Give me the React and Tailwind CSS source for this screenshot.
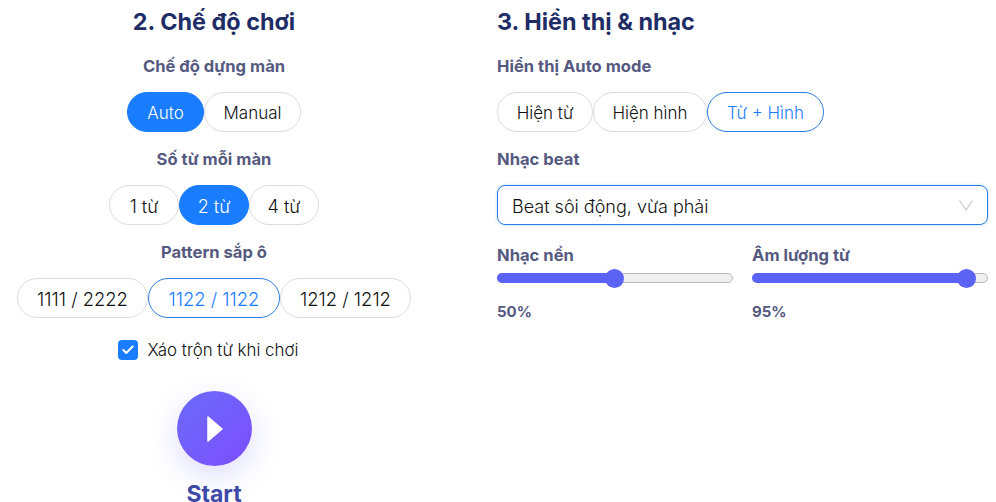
import React from "react";
import { Check } from "lucide-react";

const Pill = ({ label, state, width, size = "text-[17px]" }) => {
  const styles = {
    solid: "bg-[#1a7cff] border-[#1a7cff] text-white",
    outline: "bg-white border-[#2a7de1] text-[#1a7cff]",
    idle: "bg-white border-[#dcdcdc] text-[#111111]",
  };
  return (
    <div
      className={`h-10 flex items-center justify-center rounded-[20px] border pt-[3px] font-[350] ${size} ${styles[state]} ${width}`}
    >
      {label}
    </div>
  );
};

const Label = ({ children, className = "" }) => (
  <div className={`h-6 leading-6 text-[16.6px] font-bold text-[#55597f] ${className}`}>{children}</div>
);

const Slider = ({ label, value, thumb, fill }) => (
  <div className="w-[236px]">
    <Label>{label}</Label>
    <div className="relative mt-[6px] h-[10px] w-full rounded-full border border-[#b8b8b8] bg-[#efefef]">
      <div className={`absolute -left-px -top-px h-[10px] rounded-full bg-[#5b63f5] ${fill}`} />
      <div className={`absolute -top-[5px] h-[19px] w-[19px] rounded-full bg-[#5b63f5] ${thumb}`} />
    </div>
    <div className="mt-[17px] h-6 leading-6 text-[15px] font-bold text-[#55597f]">{value}</div>
  </div>
);

export default function App() {
  return (
    <div className="flex h-[502px] w-[996px] items-start overflow-hidden bg-white font-['Inter','Noto_Sans',sans-serif]">
      <div className="flex w-[428px] flex-col items-center shrink-0">
        <h2 className="mt-[5px] h-[34px] leading-[34px] text-[23.4px] font-bold text-[#1f2d66]">2. Chế độ chơi</h2>
        <Label className="mt-[15px]">Chế độ dựng màn</Label>
        <div className="mt-[14px] flex">
          <Pill label="Auto" state="solid" width="w-[77px]" />
          <Pill label="Manual" state="idle" width="w-[97px]" />
        </div>
        <Label className="mt-[15px]">Số từ mỗi màn</Label>
        <div className="mt-[14px] flex">
          <Pill label="1 từ" state="idle" width="w-[70px]" size="text-[18px]" />
          <Pill label="2 từ" state="solid" width="w-[70px]" size="text-[18px]" />
          <Pill label="4 từ" state="idle" width="w-[70px]" size="text-[18px]" />
        </div>
        <Label className="mt-[15px]">Pattern sắp ô</Label>
        <div className="mt-[14px] flex">
          <Pill label="1111 / 2222" state="idle" width="w-[131px]" size="text-[18.4px]" />
          <Pill label="1122 / 1122" state="outline" width="w-[132px]" size="text-[18.4px]" />
          <Pill label="1212 / 1212" state="idle" width="w-[131px]" size="text-[18.4px]" />
        </div>
        <div className="mt-[22px] mr-[12px] flex h-5 items-center gap-[10px]">
          <div className="flex h-5 w-5 items-center justify-center rounded-[4px] bg-[#1a7cff]">
            <Check className="h-[14px] w-[14px] text-white" strokeWidth={3.5} />
          </div>
          <span className="pt-[2px] text-[16.9px] font-[350] text-[#111111]">Xáo trộn từ khi chơi</span>
        </div>
        <div className="mt-[31px] flex h-[75px] w-[75px] items-center justify-center rounded-full bg-gradient-to-br from-[#6a6af8] to-[#7c4dff] shadow-[0_10px_30px_rgba(108,99,255,0.22)]">
          <svg width="16" height="26" viewBox="0 0 16 26" className="ml-[1px]">
            <path d="M1 1 L15 13 L1 25 Z" fill="white" stroke="white" strokeWidth="1.5" strokeLinejoin="round" />
          </svg>
        </div>
        <div className="mt-[16px] text-[23px] leading-6 font-bold text-[#3f4aa8]">Start</div>
      </div>

      <div className="ml-[69px] flex w-[491px] flex-col shrink-0">
        <h2 className="mt-[5px] h-[34px] leading-[34px] text-[23.4px] font-bold text-[#1f2d66]">3. Hiển thị & nhạc</h2>
        <Label className="mt-[15px]">Hiển thị Auto mode</Label>
        <div className="mt-[14px] flex">
          <Pill label="Hiện từ" state="idle" width="w-[96px]" />
          <Pill label="Hiện hình" state="idle" width="w-[114px]" />
          <Pill label="Từ + Hình" state="outline" width="w-[117px]" />
        </div>
        <Label className="mt-[15px]">Nhạc beat</Label>
        <div className="mt-[14px] flex h-10 items-center justify-between rounded-[8px] border border-[#2a7de1] pl-[14px] pr-[14px] shadow-[0_0_3px_rgba(26,124,255,0.35)]">
          <span className="pt-[2px] text-[18px] font-[350] text-[#111111]">Beat sôi động, vừa phải</span>
          <svg width="14" height="11" viewBox="0 0 14 11" fill="none">
            <path d="M0.5 0.5 L7 10 L13.5 0.5" stroke="#c8c8c8" strokeWidth="1.2" />
          </svg>
        </div>
        <div className="mt-[18px] flex gap-[19px]">
          <Slider label="Nhạc nền" value="50%" fill="w-[117px]" thumb="left-[107px]" />
          <Slider label="Âm lượng từ" value="95%" fill="w-[214px]" thumb="left-[204px]" />
        </div>
      </div>
    </div>
  );
}
